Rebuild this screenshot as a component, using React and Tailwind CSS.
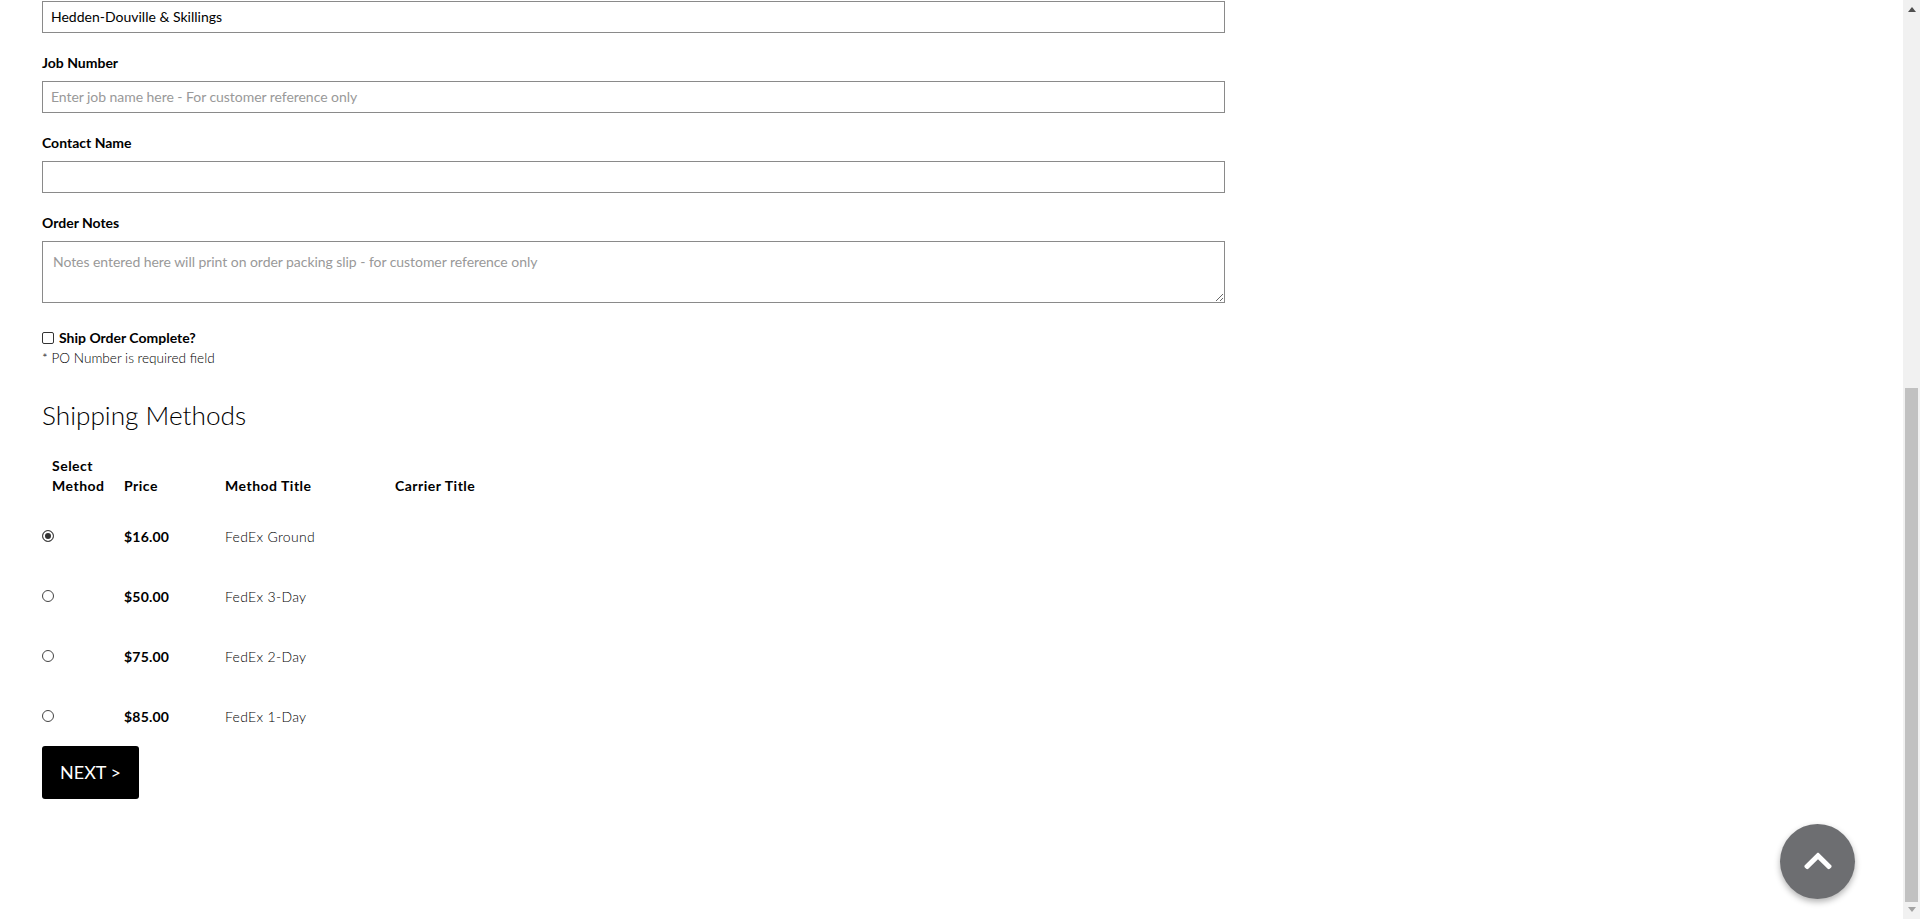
import { FaChevronUp } from 'react-icons/fa'

const rates = [
    { price: '$16.00', title: 'FedEx Ground', checked: true },
    { price: '$50.00', title: 'FedEx 3-Day' },
    { price: '$75.00', title: 'FedEx 2-Day' },
    { price: '$85.00', title: 'FedEx 1-Day' },
]

function Field({ label, placeholder }) {
    return (
        <div>
            <label className="block h-[48px] pt-[20px] text-[14px] leading-[20px] font-bold text-black">{label}</label>
            <input
                type="text"
                placeholder={placeholder}
                className="block h-[32px] w-full border border-[#8a8a8a] pr-[8px] pb-[2px] pl-[8px] text-[14px] tracking-[-0.05px] text-black placeholder:text-[#999] outline-none"
            />
        </div>
    )
}

export default function App() {
    return (
        <div className="flex h-[919px] overflow-hidden bg-white font-['Lato',sans-serif] text-black">
            <main className="min-w-0 flex-1 pl-[42px]">
                <div className="w-[1183px] pt-px">
                    <input
                        type="text"
                        defaultValue="Hedden-Douville & Skillings"
                        className="block h-[32px] w-full border border-[#8a8a8a] pr-[8px] pb-[2px] pl-[8px] text-[14px] text-black outline-none"
                    />
                    <Field label="Job Number" placeholder="Enter job name here - For customer reference only" />
                    <Field label="Contact Name" />
                    <label className="block h-[48px] pt-[20px] text-[14px] leading-[20px] font-bold text-black">Order Notes</label>
                    <textarea
                        placeholder="Notes entered here will print on order packing slip - for customer reference only"
                        className="block h-[62px] w-full border border-[#8a8a8a] px-[10px] py-[10px] text-[14px] leading-[20px] tracking-[-0.05px] text-black placeholder:text-[#999] outline-none"
                    />
                </div>

                <label className="mt-[24px] flex h-[20px] items-center gap-[5px] text-[14px] font-bold text-black">
                    <input type="checkbox" className="m-0 mt-px h-[12px] w-[12px] appearance-none rounded-[2px] border border-[#333] bg-white" />
                    Ship Order Complete?
                </label>
                <p className="mt-px text-[13.6px] leading-[20px] font-light">* PO Number is required field</p>

                <h2 className="mt-[29px] text-[26.2px] leading-[36px] font-light">Shipping Methods</h2>

                <table className="mt-[13px] border-collapse text-[14px] tracking-[0.3px]">
                    <thead>
                        <tr className="text-left tracking-[0.5px] text-black">
                            <th className="h-[60px] w-[82px] pl-[10px] align-middle leading-[20px] font-bold">Select<br />Method</th>
                            <th className="w-[101px] pt-[18px] font-bold">Price</th>
                            <th className="w-[170px] pt-[18px] font-bold">Method Title</th>
                            <th className="pt-[18px] font-bold">Carrier Title</th>
                        </tr>
                    </thead>
                    <tbody>
                        {rates.map((rate) => (
                            <tr key={rate.title} className="h-[60px]">
                                <td>
                                    <input
                                        type="radio"
                                        name="shipping"
                                        defaultChecked={rate.checked}
                                        className="m-0 -mt-px block h-[12px] w-[12px] appearance-none rounded-full border border-[#444] bg-white checked:bg-[#333] checked:shadow-[inset_0_0_0_2px_#fff]"
                                    />
                                </td>
                                <td className="font-bold tracking-[0.2px] text-black">{rate.price}</td>
                                <td className="font-light">{rate.title}</td>
                                <td></td>
                            </tr>
                        ))}
                    </tbody>
                </table>

                <button className="h-[53px] w-[97px] rounded-[3px] bg-black text-[18px] text-white">NEXT &gt;</button>
            </main>

            <aside className="w-[17px] shrink-0 bg-[#f1f1f1]">
                <div className="mx-auto mt-[7px] h-0 w-0 border-x-[4px] border-b-[5px] border-x-transparent border-b-[#505050]"></div>
                <div className="mx-auto mt-[376px] h-[514px] w-[13px] bg-[#c1c1c1]"></div>
                <div className="mx-auto mt-[5px] h-0 w-0 border-x-[4px] border-t-[5px] border-x-transparent border-t-[#a3a3a3]"></div>
            </aside>

            <button className="absolute left-[1780px] top-[824px] flex h-[75px] w-[75px] items-center justify-center rounded-full bg-[#6d6e71] text-white shadow-[0_3px_6px_rgba(0,0,0,0.3)]">
                <FaChevronUp className="-mt-[2px] h-[32px] w-[32px]" />
            </button>
        </div>
    )
}
